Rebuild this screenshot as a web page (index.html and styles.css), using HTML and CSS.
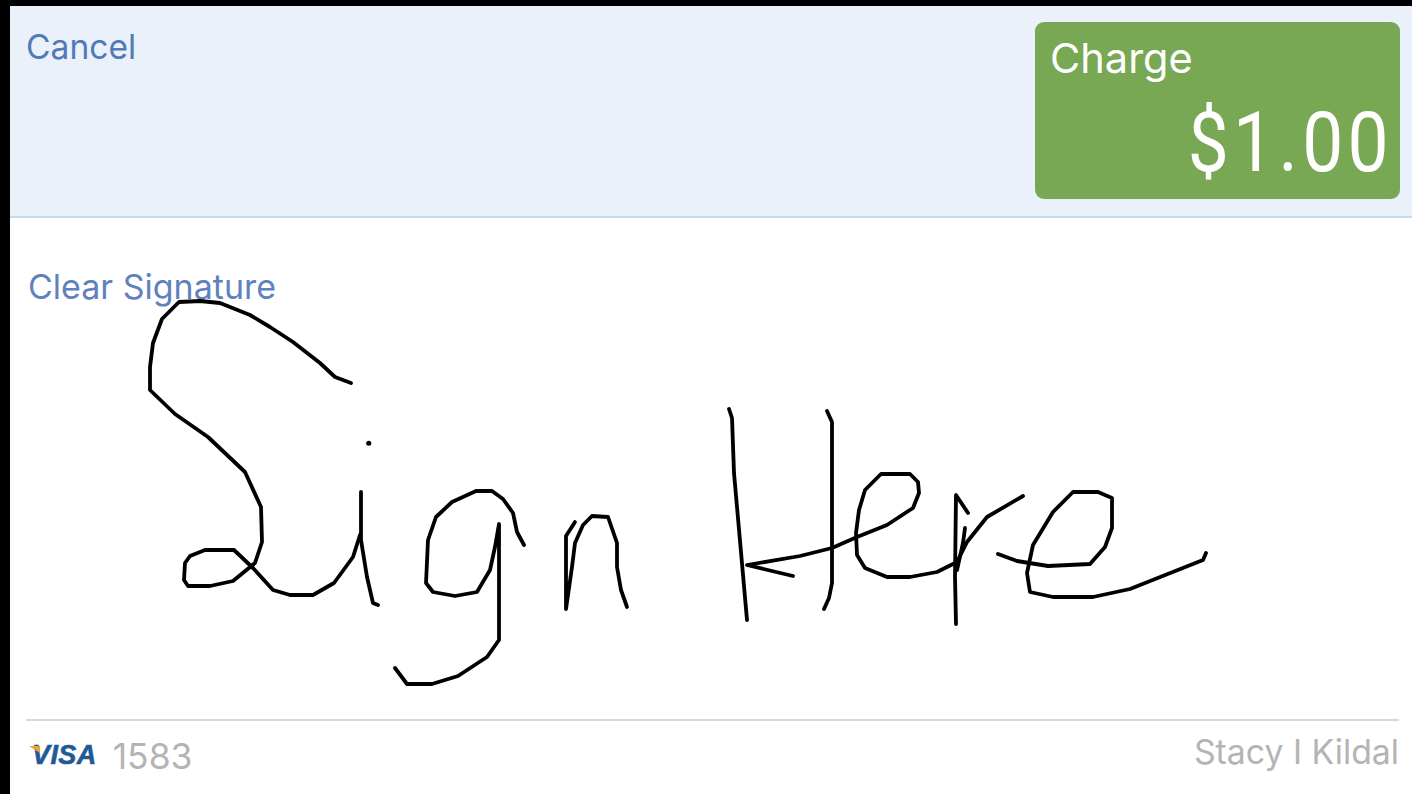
FILE: index.html
```html
<!DOCTYPE html>
<html>
    <head>
        <title>Sign Here</title>
        <meta charset="utf-8">
        <link rel="stylesheet" href="styles.css">
    </head>
    <body>
        <div class="screen">
            <div class="header">
                <a class="cancel">Cancel</a>
                <div class="charge">
                    <div class="chargeLabel">Charge</div>
                    <div class="chargeAmount">$1.00</div>
                </div>
            </div>
            <div class="pad">
                <a class="clear">Clear Signature</a>
                <svg class="ink" viewBox="10 218 1402 502" width="1402" height="502">
                    <g fill="none" stroke="#000" stroke-width="3.8" stroke-linejoin="round" stroke-linecap="round">
                        <path d="M351 383 335 377 320 363 293 342 270 327 250 315 220 303 200 301 179 302 162 319 153 343 150 367 150 390 175 414 208 437 245 472 261 507 262 542 255 563 233 581 210 586 188 586 184 580 185 563 190 556 205 550 234 550 253 568 273 590 290 595 313 595 334 583 353 557 360 535"/>
                        <path d="M361 492V540L367 577 373 603 378 605"/>
                        <path d="M368.700 443.300h.1" stroke-width="5"/>
                        <path d="M524 545 517 532 513 513 503 499 492 491 476 491 452 502 436 517 428 540 426 583 433 592 455 596 477 592 490 570 495 547 499 524V640L487 657 458 676 432 684 407 684 395 668"/>
                        <path d="M575 522 566 536V609L572 567 575 543 583 525 592 516 608 517 617 543 617 567 621 590 627 607"/>
                        <path d="M729 409 732 418 734 473 747 620"/>
                        <path d="M793 576 747 565 800 556 832 548 857 537 887 525 913 508 919 493 918 482 910 474 881 474 865 490 859 510 856 533 857 555 865 568 887 577 910 577 937 572 957 562 967 542 987 517 1023 496"/>
                        <path d="M827 411 832 422V583L829 598 824 609"/>
                        <path d="M968 513 956 495 955 577 956 624"/>
                        <path d="M965 528 963 543 957 570"/>
                        <path d="M998 554 1017 561 1048 566 1090 564 1105 547 1112 528 1112 498 1098 492 1073 492 1053 512 1033 545 1027 573 1030 592 1053 597 1093 597 1130 589 1203 560 1206 553"/>
                    </g>
                </svg>
            </div>
            <div class="footer">
                <div class="card">
                    <span class="visa">VISA</span>
                    <span class="cardNo">1583</span>
                </div>
                <div class="holder">Stacy I Kildal</div>
            </div>
        </div>
    </body>
</html>
```

FILE: styles.css
```css
html, body {
    margin: 0;
    padding: 0;
    background: black;
}
.screen {
    display: flex;
    flex-direction: column;
    height: 794px;
    margin-left: 10px;
    padding-top: 6px;
    box-sizing: border-box;
    font-family: Inter, "Liberation Sans", sans-serif;
    background: black;
}
.header {
    display: flex;
    justify-content: space-between;
    align-items: flex-start;
    height: 194px;
    padding: 16px 12px 0 16px;
    background: #eaf1fa;
    border-bottom: 2px solid #c9d7e8;
}
.cancel {
    margin-top: 7px;
    font-size: 33.6px;
    line-height: 36px;
    color: #5479b8;
}
.charge {
    width: 365px;
    height: 177px;
    padding: 14px 10px 0 15px;
    box-sizing: border-box;
    border-radius: 9px;
    background: #79a855;
    color: white;
}
.chargeLabel {
    font-size: 41.5px;
    line-height: 44px;
}
.chargeAmount {
    margin-top: 18px;
    margin-right: -3px;
    font-family: Roboto, sans-serif;
    font-size: 84px;
    line-height: 90px;
    letter-spacing: 5px;
    text-align: right;
    transform: scaleX(0.87);
    transform-origin: right;
}
.pad {
    position: relative;
    height: 501px;
    padding: 50px 0 0 18px;
    box-sizing: border-box;
    background: white;
}
.clear {
    font-size: 34px;
    line-height: 38px;
    color: #5f82bf;
}
.ink {
    position: absolute;
    top: 0;
    left: 0;
}
.footer {
    position: relative;
    flex: 1;
    display: flex;
    justify-content: space-between;
    padding: 0 13px 0 22px;
    background: white;
}
.footer::before {
    content: "";
    position: absolute;
    top: 0;
    left: 16px;
    right: 13px;
    height: 2px;
    background: #d5d9da;
}
.card {
    display: flex;
    align-items: center;
    gap: 16px;
    height: 74px;
}
.visa {
    position: relative;
    padding-bottom: 1px;
    font-family: "Liberation Sans", sans-serif;
    font-size: 27px;
    font-weight: bold;
    font-style: italic;
    letter-spacing: 0.4px;
    color: #1f5a96;
    -webkit-text-stroke: 0.6px #1f5a96;
}
.visa::before {
    content: "";
    position: absolute;
    top: 6px;
    left: -3px;
    width: 11px;
    height: 7px;
    background: #e8a33c;
    clip-path: polygon(0 0, 100% 0, 100% 100%);
}
.cardNo {
    font-size: 35.5px;
    color: #b4b4b4;
}
.holder {
    height: 66px;
    line-height: 66px;
    font-size: 33.8px;
    color: #b4b4b4;
}
```
